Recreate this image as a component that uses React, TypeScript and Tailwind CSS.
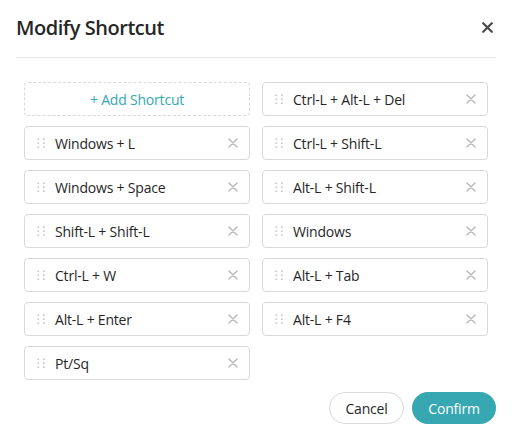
const LEFT = ["Windows + L", "Windows + Space", "Shift-L + Shift-L", "Ctrl-L + W", "Alt-L + Enter", "Pt/Sq"];
const RIGHT = ["Ctrl-L + Alt-L + Del", "Ctrl-L + Shift-L", "Alt-L + Shift-L", "Windows", "Alt-L + Tab", "Alt-L + F4"];

const DragHandle = () => (
  <svg width="8" height="10" viewBox="0 0 8 10" className="shrink-0 text-[#c4c4c4]" fill="currentColor">
    <rect x="0.5" y="0.5" width="1.6" height="1.6" />
    <rect x="6" y="0.5" width="1.6" height="1.6" />
    <rect x="0.5" y="4.5" width="1.6" height="1.6" />
    <rect x="6" y="4.5" width="1.6" height="1.6" />
    <rect x="0.5" y="8.5" width="1.6" height="1.6" />
    <rect x="6" y="8.5" width="1.6" height="1.6" />
  </svg>
);

const ShortcutItem = ({ label }: { label: string }) => (
  <div className="flex h-[34px] items-center rounded border border-[#d9d9d9] bg-white pl-[12px] pr-[11px]">
    <DragHandle />
    <span className="ml-[10px] flex-1 truncate text-[14px] tracking-[-0.2px] text-[#262626]">{label}</span>
    <svg width="10" height="10" viewBox="0 0 10 10" className="shrink-0" stroke="#bdbdbd" strokeWidth="1.6" strokeLinecap="round">
      <path d="M1 1L9 9M9 1L1 9" />
    </svg>
  </div>
);

export default function App() {
  const rows = [
    { left: null as string | null, right: RIGHT[0] },
    ...LEFT.map((l, i) => ({ left: l, right: RIGHT[i + 1] ?? null })),
  ];

  return (
    <div
      className="flex h-[440px] w-[512px] flex-col bg-white px-4 pb-4"
      style={{ fontFamily: '"Open Sans", "Liberation Sans", sans-serif' }}
    >
      <div className="flex h-[58px] items-center justify-between border-b border-[#e8e8e8] pb-[2px]">
        <h2 className="text-[20px] font-semibold tracking-[-0.45px] text-[#262626]">Modify Shortcut</h2>
        <button className="mr-[3px] text-[#4a4a4a]">
          <svg width="11" height="11" viewBox="0 0 11 11" stroke="currentColor" strokeWidth="2.2" strokeLinecap="round">
            <path d="M1.2 1.2L9.8 9.8M9.8 1.2L1.2 9.8" />
          </svg>
        </button>
      </div>

      <div className="mt-6 grid grid-cols-2 gap-x-3 gap-y-[10px] px-2">
        {rows.map((row, i) => (
          <div key={i} className="contents">
            {row.left === null ? (
              <button className="h-[34px] rounded border border-dashed border-[#d9d9d9] text-[14px] tracking-[-0.2px] text-[#37a7b2]">
                + Add Shortcut
              </button>
            ) : (
              <ShortcutItem label={row.left} />
            )}
            {row.right ? <ShortcutItem label={row.right} /> : <div />}
          </div>
        ))}
      </div>

      <div className="mt-3 flex justify-end gap-2">
        <button className="h-8 w-[75px] rounded-full border border-[#d9d9d9] text-[14px] tracking-[-0.2px] text-[#262626]">Cancel</button>
        <button className="h-8 w-[84px] rounded-full bg-[#37a7b2] text-[14px] tracking-[-0.2px] text-white">Confirm</button>
      </div>
    </div>
  );
}
